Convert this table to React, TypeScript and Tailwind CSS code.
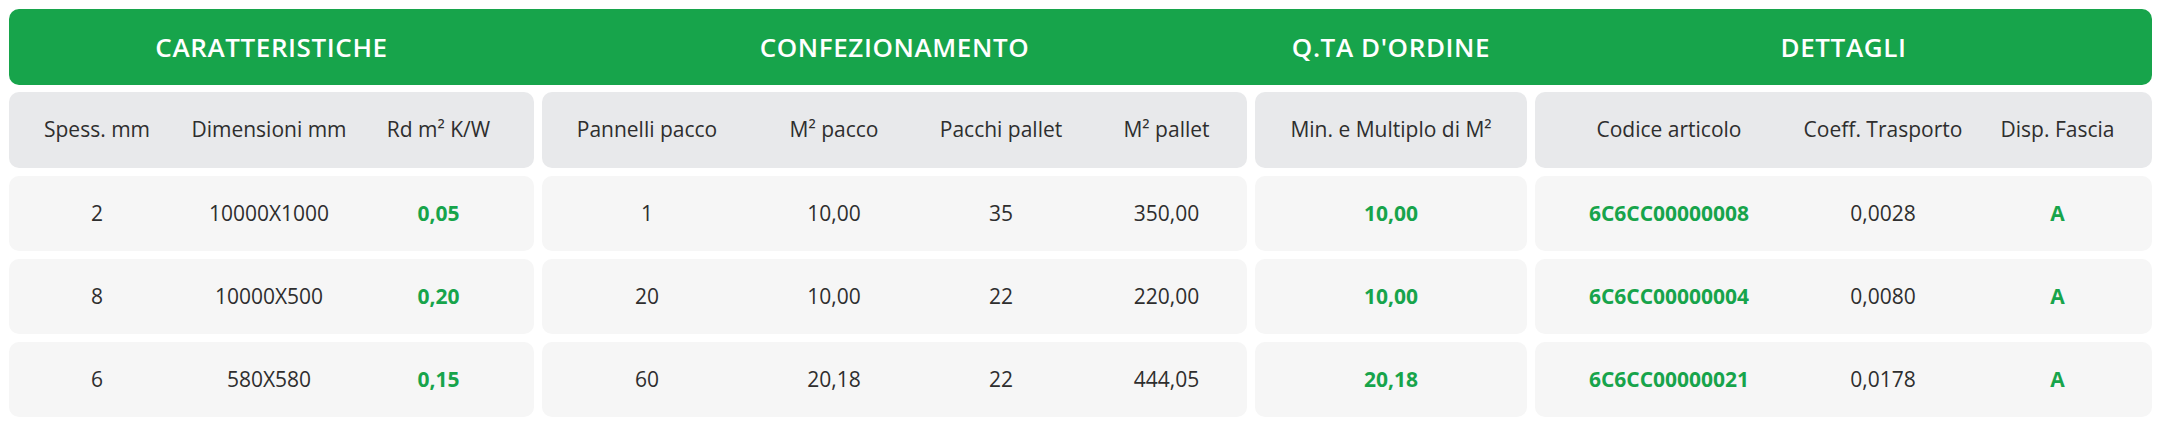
const GROUPS = 'grid grid-cols-[525px_705px_272px_1fr] gap-x-[8px]';

const g1Cols = 'grid grid-cols-[176px_168px_171px]';
const g2Cols = 'grid grid-cols-[210px_164px_170px_1fr]';
const g3Cols = 'grid grid-cols-1';
const g4Cols = 'grid grid-cols-[268px_160px_1fr]';

type Cell = { v: string; green?: boolean };

const headers: string[][] = [
  ['Spess. mm', 'Dimensioni mm', 'Rd m² K/W'],
  ['Pannelli pacco', 'M² pacco', 'Pacchi pallet', 'M² pallet'],
  ['Min. e Multiplo di M²'],
  ['Codice articolo', 'Coeff. Trasporto', 'Disp. Fascia'],
];

const rows: Cell[][][] = [
  [
    [{ v: '2' }, { v: '10000X1000' }, { v: '0,05', green: true }],
    [{ v: '1' }, { v: '10,00' }, { v: '35' }, { v: '350,00' }],
    [{ v: '10,00', green: true }],
    [{ v: '6C6CC00000008', green: true }, { v: '0,0028' }, { v: 'A', green: true }],
  ],
  [
    [{ v: '8' }, { v: '10000X500' }, { v: '0,20', green: true }],
    [{ v: '20' }, { v: '10,00' }, { v: '22' }, { v: '220,00' }],
    [{ v: '10,00', green: true }],
    [{ v: '6C6CC00000004', green: true }, { v: '0,0080' }, { v: 'A', green: true }],
  ],
  [
    [{ v: '6' }, { v: '580X580' }, { v: '0,15', green: true }],
    [{ v: '60' }, { v: '20,18' }, { v: '22' }, { v: '444,05' }],
    [{ v: '20,18', green: true }],
    [{ v: '6C6CC00000021', green: true }, { v: '0,0178' }, { v: 'A', green: true }],
  ],
];

const colsFor = [g1Cols, g2Cols, g3Cols, g4Cols];

export default function App() {
  return (
    <div className="min-h-screen bg-white pl-[9px] pr-[8px] pt-[9px] font-['Open_Sans',sans-serif] text-[21px] text-[#2e2e2e]">
      {/* Intestazione verde */}
      <div className={`${GROUPS} h-[76px] rounded-[10px] bg-[#17a44b]`}>
        {['CARATTERISTICHE', 'CONFEZIONAMENTO', "Q.TA D'ORDINE", 'DETTAGLI'].map(t => (
          <div key={t} className="flex items-center justify-center text-[26px] font-semibold tracking-[0.6px] text-white">
            {t}
          </div>
        ))}
      </div>

      {/* Sotto-intestazioni */}
      <div className={`${GROUPS} mt-[7px]`}>
        {headers.map((group, gi) => (
          <div key={gi} className={`${colsFor[gi]} h-[76px] rounded-[10px] bg-[#e8e9eb]`}>
            {group.map(h => (
              <div key={h} className="flex items-center justify-center whitespace-nowrap">{h}</div>
            ))}
          </div>
        ))}
      </div>

      {/* Righe dati */}
      {rows.map((row, ri) => (
        <div key={ri} className={`${GROUPS} mt-[8px]`}>
          {row.map((group, gi) => (
            <div key={gi} className={`${colsFor[gi]} h-[75px] rounded-[10px] bg-[#f6f6f6]`}>
              {group.map((c, ci) => (
                <div
                  key={ci}
                  className={`flex items-center justify-center whitespace-nowrap ${c.green ? 'font-bold text-[#17a44b]' : ''}`}
                >
                  {c.v}
                </div>
              ))}
            </div>
          ))}
        </div>
      ))}
    </div>
  );
}
